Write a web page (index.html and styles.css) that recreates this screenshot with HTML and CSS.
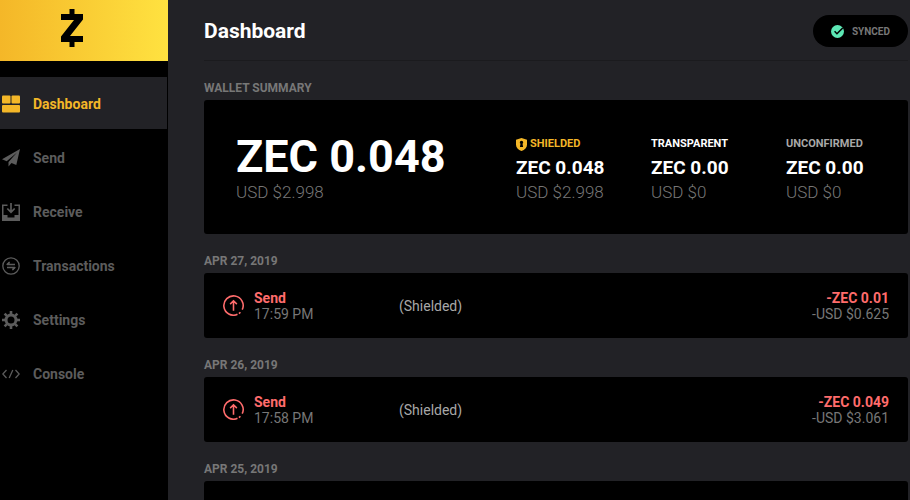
FILE: index.html
```html
<!DOCTYPE html>
<html lang="en">
<head>
  <meta charset="UTF-8"/>
  <meta content="width=device-width, initial-scale=1.0" name="viewport"/>
  <title>Dashboard</title>
  <link rel="stylesheet" href="styles.css">
</head>
<body>
<div class="app">
  <aside class="sidebar">
    <div class="logo">
      <svg width="22" height="38" viewBox="0 0 22 38" role="img" aria-label="Zcash">
        <path d="M8.500 0h5v5H22v5.500L9 27h13v6h-8.500v5h-5v-5H0v-5.500L13 11H0V5h8.500z"/>
      </svg>
    </div>
    <nav class="menu">
      <a class="menu-item active" href="#dashboard">
        <svg class="menu-icon" viewBox="0 0 18 18" fill="currentColor">
          <rect x="0" y="0.500" width="8.500" height="8" rx="1"/>
          <rect x="9.500" y="0.500" width="8.500" height="8" rx="1"/>
          <rect x="0" y="10" width="18" height="7.500" rx="1"/>
        </svg>
        Dashboard
      </a>
      <a class="menu-item" href="#send">
        <svg class="menu-icon" viewBox="0 0 18 18" fill="currentColor">
          <path d="M18 0L0 10.300l4.700 2L15 3.500 6.500 13v4.500l3-3.400 4.800 2z"/>
        </svg>
        Send
      </a>
      <a class="menu-item" href="#receive">
        <svg class="menu-icon" viewBox="0 0 18 18">
          <path fill="currentColor" d="M0 1.500h5.500V3H1.500v9H5.500v2.500h7V12h4V3h-4V1.500H18V18H0z"/>
          <path fill="none" stroke="currentColor" stroke-width="1.700" d="M9 0v9M5.300 5.500L9 9.200l3.700-3.700"/>
        </svg>
        Receive
      </a>
      <a class="menu-item" href="#transactions">
        <svg class="menu-icon" viewBox="0 0 18 18" fill="none" stroke="currentColor" stroke-width="1.300">
          <circle cx="9" cy="9" r="8.200"/>
          <path d="M13 7.500H5M7.500 5L5 7.500M5 10.500h8M10.500 13l2.500-2.500"/>
          <path fill="currentColor" stroke="none" d="M4 8l3.500-3.500V8zM14 10l-3.500 3.500V10z"/>
        </svg>
        Transactions
      </a>
      <a class="menu-item" href="#settings">
        <svg class="menu-icon" viewBox="0 0 18 18" fill="none" stroke="currentColor">
          <circle cx="9" cy="9" r="5" stroke-width="3"/>
          <path stroke-width="2.600" d="M9 0v3.500M9 14.500V18M0 9h3.500M14.500 9H18M2.600 2.600l2.500 2.500M12.900 12.900l2.500 2.500M2.600 15.400l2.500-2.500M12.900 5.100l2.500-2.500"/>
        </svg>
        Settings
      </a>
      <a class="menu-item" href="#console">
        <svg class="menu-icon" viewBox="0 0 18 18" fill="none" stroke="currentColor" stroke-width="1.300">
          <path d="M4.500 5L.800 9l3.700 4M13.500 5l3.700 4-3.700 4M10.800 5l-3.600 8"/>
        </svg>
        Console
      </a>
    </nav>
  </aside>

  <main class="content">
    <header class="header">
      <h1>Dashboard</h1>
      <div class="status">
        <svg width="13" height="13" viewBox="0 0 12 12">
          <circle cx="6" cy="6" r="6" fill="#5de8b5"/>
          <path d="M3.300 5.800l2.200 2.200L10.800 2.800" fill="none" stroke="#000" stroke-width="1.400"/>
        </svg>
        SYNCED
      </div>
    </header>

    <section>
      <h2 class="label">WALLET SUMMARY</h2>
      <div class="card wallet">
        <div>
          <div class="total">ZEC 0.048</div>
          <div class="usd">USD $2.998</div>
        </div>
        <div class="balance">
          <div class="balance-name shielded">
            <svg width="11" height="13" viewBox="0 0 11 13">
              <path fill="#f4b728" d="M5.500 0L11 1.800v5c0 3-2.200 5-5.500 6.200C2.200 11.800 0 9.800 0 6.800v-5z"/>
              <path d="M3.800 4.400a1.700 1.700 0 013.400 0c0 .7-.3 1.100-.7 1.400l.6 3.200H3.900l.6-3.200c-.4-.3-.7-.7-.7-1.400z"/>
            </svg>
            SHIELDED
          </div>
          <div class="zec">ZEC 0.048</div>
          <div class="usd">USD $2.998</div>
        </div>
        <div class="balance">
          <div class="balance-name">TRANSPARENT</div>
          <div class="zec">ZEC 0.00</div>
          <div class="usd">USD $0</div>
        </div>
        <div class="balance">
          <div class="balance-name unconfirmed">UNCONFIRMED</div>
          <div class="zec">ZEC 0.00</div>
          <div class="usd">USD $0</div>
        </div>
      </div>
    </section>

    <section>
      <h2 class="label">APR 27, 2019</h2>
      <div class="card transaction">
        <svg class="sent-icon" viewBox="0 0 20 20">
          <path d="M13.800 18.400A9.200 9.200 0 1 1 18.300 14M15.200 17.700l1.400-1.300M10 15V5.500M6.800 8.700L10 5.500l3.200 3.200"/>
        </svg>
        <div class="kind">
          <div class="sent">Send</div>
          <div class="muted">17:59 PM</div>
        </div>
        <div class="address">(Shielded)</div>
        <div class="amount">
          <div class="sent">-ZEC 0.01</div>
          <div class="muted">-USD $0.625</div>
        </div>
      </div>
    </section>

    <section>
      <h2 class="label">APR 26, 2019</h2>
      <div class="card transaction">
        <svg class="sent-icon" viewBox="0 0 20 20">
          <path d="M13.800 18.400A9.200 9.200 0 1 1 18.300 14M15.200 17.700l1.400-1.300M10 15V5.500M6.800 8.700L10 5.500l3.200 3.200"/>
        </svg>
        <div class="kind">
          <div class="sent">Send</div>
          <div class="muted">17:58 PM</div>
        </div>
        <div class="address">(Shielded)</div>
        <div class="amount">
          <div class="sent">-ZEC 0.049</div>
          <div class="muted">-USD $3.061</div>
        </div>
      </div>
    </section>

    <section>
      <h2 class="label">APR 25, 2019</h2>
      <div class="card transaction"></div>
    </section>
  </main>
</div>
</body>
</html>
```
FILE: styles.css
```css
* {
  box-sizing: border-box;
}
body {
  margin: 0;
  font-family: Roboto, sans-serif;
  background-color: #222226;
  color: #fff;
}
.app {
  display: flex;
  height: 100vh;
  overflow: hidden;
}
.sidebar {
  flex: 0 0 168px;
  background-color: #000;
}
.logo {
  display: flex;
  justify-content: center;
  height: 61px;
  padding: 9px 25px 0 0;
  background: linear-gradient(to right, #f4b728, #ffe240);
}
.menu {
  display: flex;
  flex-direction: column;
  gap: 2px;
  padding: 16px 1px 0 0;
}
.menu-item {
  display: flex;
  align-items: center;
  gap: 13px;
  height: 52px;
  padding: 2px 0 0 2px;
  color: #5c5c5c;
  font-size: 14px;
  font-weight: bold;
  text-decoration: none;
}
.menu-item.active {
  background-color: #222226;
  color: #f4b728;
}
.menu-icon {
  width: 18px;
  height: 18px;
}
.content {
  flex: 1;
  padding: 0 2px 0 36px;
}
.header {
  display: flex;
  align-items: center;
  justify-content: space-between;
  height: 61px;
  margin-bottom: 20px;
  padding-top: 2px;
  border-bottom: 1px solid #1b1b1e;
}
h1 {
  margin: 0;
  font-size: 21px;
}
.status {
  display: flex;
  align-items: center;
  gap: 8px;
  height: 32px;
  padding: 0 18px;
  border-radius: 16px;
  background-color: #000;
  color: #777;
  font-size: 10px;
  font-weight: bold;
}
.label {
  margin: 0 0 5px;
  color: #777;
  font-size: 12px;
  font-weight: bold;
  line-height: 14px;
}
.card {
  margin-bottom: 20px;
  border-radius: 3px;
  background-color: #000;
}
.wallet {
  display: grid;
  grid-template-columns: 1fr repeat(3, 90px);
  column-gap: 45px;
  align-items: end;
  height: 134px;
  padding: 0 32px 30px;
}
.total {
  font-size: 45px;
  font-weight: bold;
  line-height: 46px;
}
.balance-name {
  display: flex;
  align-items: center;
  gap: 3px;
  font-size: 11px;
  font-weight: bold;
  line-height: 14px;
}
.shielded {
  color: #f4b728;
}
.unconfirmed {
  color: #a8a8a8;
}
.zec {
  margin-top: 5px;
  font-size: 19px;
  font-weight: bold;
  line-height: 24px;
}
.usd {
  color: #777;
  font-size: 17px;
  font-weight: 300;
  line-height: 24px;
}
.transaction {
  display: flex;
  align-items: center;
  height: 65px;
  padding: 0 19px;
  font-size: 14px;
  line-height: 16px;
}
.sent-icon {
  width: 21px;
  height: 21px;
  margin-right: 10px;
  fill: none;
  stroke: #ff6c6c;
  stroke-width: 1.5;
}
.kind {
  width: 145px;
}
.sent {
  color: #ff6c6c;
  font-weight: bold;
}
.muted {
  color: #777;
}
.address {
  color: #a8a8a8;
}
.amount {
  margin-left: auto;
  text-align: right;
}
```
